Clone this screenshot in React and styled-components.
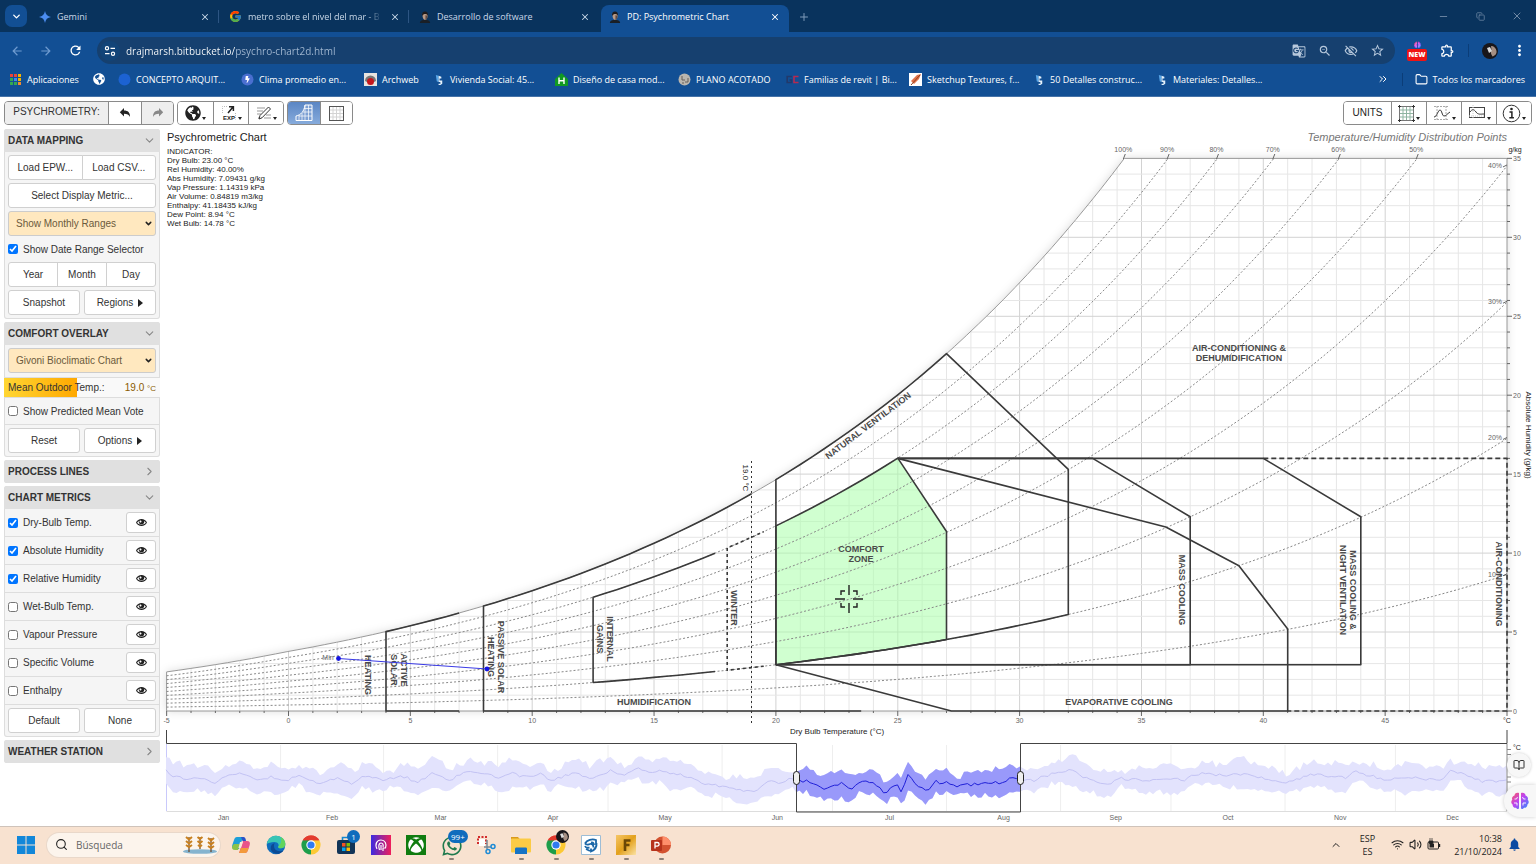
import * as React from "react";
import styled, { createGlobalStyle, css } from "styled-components";
import {
  MdArrowBack,
  MdArrowForward,
  MdRefresh,
  MdGTranslate,
  MdZoomOut,
  MdOutlineVisibilityOff,
  MdStarOutline,
  MdOutlineExtension,
  MdMoreVert,
  MdNotifications,
} from "react-icons/md";
import { FaGlobeAmericas, FaXbox, FaWhatsapp, FaBolt } from "react-icons/fa";
import { FcGoogle } from "react-icons/fc";
import { ImEye } from "react-icons/im";
import {
  X,
  Plus,
  Minus,
  Copy,
  ChevronDown,
  ChevronRight,
  ChevronUp,
  ChevronsRight,
  Folder,
  Search,
  Wifi,
  Volume2,
  BookOpen,
} from "lucide-react";

const ui = '"Open Sans", "Noto Sans", sans-serif';
const sans = '"Liberation Sans", Arial, sans-serif';

const GlobalStyle = createGlobalStyle`
  * { box-sizing: border-box; }
  body { margin: 0; background: #fff; }
  button, input, select { font: inherit; color: inherit; margin: 0; }
  button { padding: 0; border: 0; background: none; cursor: pointer; }
  a { color: inherit; text-decoration: none; }
`;

const Page = styled.div`
  min-height: 100vh;
  display: flex;
  flex-direction: column;
  font-family: ${sans};
  font-size: 10px;
  color: #333;
`;

/* ---------- browser ---------- */

const Browser = styled.header`
  font-family: ${ui};
  font-size: 9px;
  color: #fff;
  background: #124f94;
`;

const TabStrip = styled.div`
  height: 32px;
  display: flex;
  align-items: flex-end;
  padding: 0 12px 0 5px;
  background: #09335d;
`;

const TabSearch = styled.button`
  width: 22px;
  height: 22px;
  margin: 0 4px 5px 0;
  display: grid;
  place-items: center;
  border-radius: 7px;
  background: #124f94;
`;

const Tab = styled.div`
  width: 190px;
  height: 27px;
  display: flex;
  align-items: center;
  gap: 6px;
  padding: 0 ${({ $divided }) => ($divided ? 2 : 9)}px 4px 8px;
  color: #c9d8e8;
  border-radius: 8px 8px 0 0;
  ${({ $active }) =>
    $active &&
    css`
      width: 188px;
      padding-right: 7px;
      color: #fff;
      background: #124f94;
    `}
`;

const TabTitle = styled.span`
  flex: 1;
  overflow: hidden;
  white-space: nowrap;
  ${({ $fade }) => $fade && "mask-image: linear-gradient(90deg, #000 88%, transparent);"}
`;

const IconButton = styled.button`
  display: grid;
  place-items: center;
  min-width: 14px;
  min-height: 14px;
  color: ${({ $color }) => $color || "inherit"};
`;

const Divider = styled.span`
  width: 1px;
  height: 13px;
  background: ${({ $color }) => $color || "#2d5583"};
`;

const NewTab = styled(IconButton)`
  margin: 0 0 8px 8px;
  color: #7f9bba;
`;

const WindowButtons = styled.div`
  margin-left: auto;
  height: 32px;
  display: flex;
  align-items: center;
  gap: 23px;
  color: #7089a5;
`;

const NavBar = styled.div`
  display: flex;
  align-items: center;
  padding: 5px 8px 0 10px;
`;

const NavButtons = styled.div`
  display: flex;
  gap: 15px;
  width: 87px;
`;

const Omnibox = styled.div`
  flex: 1;
  height: 27px;
  display: flex;
  align-items: center;
  gap: 12px;
  padding: 0 10px 0 3px;
  border-radius: 14px;
  background: #16406f;
  color: #b7c8dc;
`;

const SiteInfo = styled.button`
  width: 20px;
  height: 20px;
  display: grid;
  place-items: center;
  border-radius: 50%;
  background: #124478;
  margin-right: -6px;
`;

const Url = styled.input`
  flex: 1;
  border: 0;
  outline: 0;
  padding: 0;
  font-size: 10px;
  color: transparent;
  background: linear-gradient(90deg, #fff 109px, #a4b9d2 109px);
  background-clip: text;
`;

const Extensions = styled.div`
  display: flex;
  align-items: center;
  gap: 13px;
  padding-left: 12px;
`;

const NewBadge = styled.button`
  width: 20px;
  height: 20px;
  display: flex;
  flex-direction: column;
  align-items: center;
  justify-content: flex-end;
  color: #b455e0;
  span {
    width: 20px;
    line-height: 12px;
    border-radius: 2px;
    background: #f01414;
    color: #fff;
    font-size: 7px;
    font-weight: 800;
  }
`;

const Bookmarks = styled.nav`
  height: 33px;
  display: flex;
  align-items: center;
  padding: 0 11px 2px 9px;
  border-bottom: 1px solid #4673a8;
`;

const Bookmark = styled.a`
  width: ${({ $width }) => $width}px;
  display: flex;
  align-items: center;
  gap: 5px;
  white-space: nowrap;
`;

const BookmarkEnd = styled.div`
  margin-left: auto;
  display: flex;
  align-items: center;
  gap: 12px;
`;

/* ---------- application toolbar ---------- */

const Toolbar = styled.div`
  display: flex;
  gap: 3px;
  padding: 4px;
`;

const Group = styled.div`
  display: flex;
  height: 24px;
  border: 1px solid #8a8a8a;
  border-radius: 4px;
  overflow: hidden;
  &:last-child {
    margin-left: auto;
  }
`;

const ToolLabel = styled.span`
  width: 103px;
  text-align: center;
  line-height: 20px;
  background: #eee;
`;

const Tool = styled.button`
  width: ${({ $width }) => $width || 35}px;
  display: flex;
  align-items: center;
  justify-content: center;
  gap: 1px;
  border-left: 1px solid #8a8a8a;
  background: ${({ $active }) => ($active ? "linear-gradient(#5b86c4, #86abdc)" : "#fff")};
  color: #222;
  &:first-child {
    border-left: 0;
  }
  &:disabled {
    background: #eee;
    color: #888;
  }
`;

const TextTool = styled(Tool)`
  padding-bottom: 2px;
`;

const Caret = styled.i`
  align-self: flex-end;
  margin-bottom: 4px;
  border: 2px solid transparent;
  border-top: 3px solid #222;
  border-bottom: 0;
`;

/* ---------- side bar ---------- */

const Main = styled.main`
  flex: 1;
  display: flex;
  align-items: flex-start;
  position: relative;
`;

const SideBar = styled.aside`
  width: 160px;
  flex: none;
  display: flex;
  flex-direction: column;
  gap: 3px;
  padding-left: 4px;
`;

const Panel = styled.section`
  border-radius: 3px;
  background: #f5f5f5;
  box-shadow: inset 0 0 0 1px #ddd;
  overflow: hidden;
`;

const PanelHead = styled.button`
  width: 100%;
  height: 23px;
  display: flex;
  align-items: center;
  justify-content: space-between;
  padding: 0 4px;
  background: #e0e0e0;
  font-weight: bold;
  svg {
    color: #888;
  }
`;

const Stack = styled.div`
  display: flex;
  flex-direction: column;
  gap: 3px;
  padding: ${({ $tight }) => ($tight ? "3px" : "4px")} 4px 4px;
`;

const Pair = styled.div`
  display: flex;
  gap: 4px;
`;

const Joined = styled.div`
  display: flex;
  button + button {
    margin-left: -1px;
    border-radius: 0;
  }
  button:first-child {
    border-radius: 3px 0 0 3px;
  }
  button:last-child {
    border-radius: 0 3px 3px 0;
  }
`;

const Button = styled.button`
  flex: 1;
  height: 25px;
  min-height: 25px;
  display: flex;
  align-items: center;
  justify-content: center;
  gap: 5px;
  border: 1px solid #d0d0d0;
  border-radius: 3px;
  background: #fff;
`;

const Arrow = styled.i`
  border: 4px solid transparent;
  border-left: 5px solid #222;
  border-right: 0;
`;

const SelectWrap = styled.label`
  height: 25px;
  display: grid;
  align-items: center;
  select,
  svg {
    grid-area: 1 / 1;
  }
  select {
    height: 25px;
    padding: 0 7px;
    appearance: none;
    border: 1px solid #ccc;
    border-radius: 3px;
    background: #ffe8bf;
    color: #6b5a3c;
  }
  svg {
    justify-self: end;
    margin-right: 3px;
    pointer-events: none;
    color: #222;
  }
`;

const Check = styled.label`
  flex: 1;
  display: flex;
  align-items: center;
  gap: 5px;
  input {
    width: 10px;
    height: 10px;
  }
`;

const CheckRow = styled.div`
  height: ${({ $height }) => $height || 28}px;
  display: flex;
  padding: 0 4px;
  align-items: center;
  border-bottom: ${({ $plain }) => ($plain ? 0 : "1px solid #ddd")};
`;

const EyeButton = styled.button`
  width: 30px;
  height: 21px;
  display: grid;
  place-items: center;
  border: 1px solid #d0d0d0;
  border-radius: 3px;
  background: #fff;
  color: #222;
`;

const Slider = styled.div`
  height: 21px;
  display: grid;
  align-items: center;
  border: solid #ddd;
  border-width: 1px 0;
  > * {
    grid-area: 1 / 1;
  }
  input {
    width: 100%;
    height: 19px;
    appearance: none;
    background: linear-gradient(90deg, #ffd633, #ffa800) 0 0 / 47% 100% no-repeat #f9f9f9;
  }
  input::-webkit-slider-thumb {
    appearance: none;
    width: 1px;
    height: 19px;
  }
`;

const SliderText = styled.div`
  display: flex;
  justify-content: space-between;
  padding: 0 4px;
  pointer-events: none;
  output {
    color: #8a5a00;
  }
  small {
    font-size: 8px;
  }
`;

/* ---------- charts ---------- */

const Charts = styled.div`
  flex: 1;
  min-width: 0;
  display: flex;
  flex-direction: column;
  position: relative;
  svg {
    display: block;
    width: 100%;
    height: auto;
    overflow: visible;
  }
`;

const Readout = styled.div`
  position: absolute;
  left: 7px;
  top: 2px;
  color: #222;
  h1 {
    margin: 0 0 3px;
    font-size: 11px;
    line-height: 13px;
    font-weight: normal;
  }
  p {
    margin: 0;
    font-size: 8px;
    line-height: 9px;
  }
`;

const Caption = styled.div`
  position: absolute;
  right: 29px;
  top: 2px;
  font-size: 11px;
  line-height: 13px;
  font-style: italic;
  color: #777;
`;

const Floating = styled.div`
  position: absolute;
  right: 0;
  bottom: 9px;
  display: flex;
  flex-direction: column;
  align-items: flex-end;
  gap: 8px;
`;

const ReadButton = styled.button`
  width: 24px;
  height: 24px;
  margin-right: 5px;
  display: grid;
  place-items: center;
  border-radius: 50%;
  background: #f7f7f7;
  box-shadow: 0 0 3px rgba(0, 0, 0, 0.2);
`;

const BrainButton = styled.button`
  width: 32px;
  height: 32px;
  display: grid;
  place-items: center;
  border-radius: 16px 0 0 16px;
  background: #f7f7f7;
  box-shadow: 0 0 4px rgba(0, 0, 0, 0.2);
`;

const DEG_MIN = -5;
const DEG_MAX = 50;
const px = (t) => 288.5 + t * 24.37;
const py = (w) => 711 - w * 15.79;

// humidity ratio at saturation, g/kg, at sea level
const saturation = (t) => {
  const p =
    t < 0
      ? 0.6112 * Math.exp((22.46 * t) / (272.62 + t))
      : 0.6112 * Math.exp((17.62 * t) / (243.12 + t));
  return (622 * p) / (101.325 - p);
};

const curve = (rh, from, to) => {
  const pts = [];
  const n = Math.max(2, Math.ceil(Math.abs(to - from) * 2));
  for (let i = 0; i <= n; i++) {
    const t = from + ((to - from) * i) / n;
    pts.push([t, rh * saturation(t)]);
  }
  return pts;
};

const tempAt = (rh, w) => {
  let lo = DEG_MIN;
  let hi = DEG_MAX;
  for (let i = 0; i < 30; i++) {
    const mid = (lo + hi) / 2;
    if (rh * saturation(mid) < w) lo = mid;
    else hi = mid;
  }
  return lo;
};

const path = (pts) =>
  "M" + pts.map(([t, w]) => px(t).toFixed(1) + " " + py(w).toFixed(1)).join("L");

const dry = 0.2 * saturation(20);

const comfort = [...curve(0.8, 20, 25), [27, 11.37], ...curve(0.2, 27, 20)];

const zones = [
  [[7, 0], [4, 0], ...curve(1, 4, 7)],
  [[23.5, 0], [8, 0], ...curve(1, 8, 19)],
  [...curve(0.2, 17.5, 12.5), ...curve(0.8, 12.5, 17.5)],
  [...comfort, [20, 11.75]],
  [[20, dry], ...curve(1, 20, 27), [32, 15.3], ...curve(0.2, 32, 20)],
  [[25, 16], [33, 16], [37, 12.3], [37, dry], [20, dry]],
  [[25, 16], [40, 16], [44, 12.3], [44, dry], [20, dry]],
  [[25, 16], [36, 11.65], [39, 9.2], [41, 5.2], [41, 0], [27.2, 0], [20, dry]],
];

const zoneLabels = [
  [1239, 351, 0, "AIR-CONDITIONING &", "DEHUMIDIFICATION"],
  [861, 552, 0, "COMFORT", "ZONE"],
  [654, 705, 0, "HUMIDIFICATION"],
  [1119, 705, 0, "EVAPORATIVE COOLING"],
  [870, 428, -37, "NATURAL VENTILATION"],
  [365, 675, 90, "HEATING"],
  [401, 670, 90, "ACTIVE", "SOLAR"],
  [498, 657, 90, "PASSIVE SOLAR", "HEATING"],
  [607, 639, 90, "INTERNAL", "GAINS"],
  [731, 608, 90, "WINTER"],
  [1179, 590, 90, "MASS COOLING"],
  [1350, 590, 90, "MASS COOLING &", "NIGHT VENTILATION"],
  [1496, 584, 90, "AIR-CONDITIONING"],
];

const Chart = styled.svg`
  font-family: ${sans};
  font-size: 7px;
  fill: #666;
  text-anchor: middle;
`;

const ZoneText = styled.text`
  font-size: 9px;
  font-weight: bold;
  fill: #4a4a4a;
`;

const AxisTitle = styled.text`
  font-size: 8px;
  fill: #222;
`;

const range = (a, b) => Array.from({ length: b - a + 1 }, (_, i) => a + i);

function PsychroChart() {
  const top = tempAt(1, 35);
  const outline = [...curve(1, DEG_MIN, top), [50, 35], [50, 0], [-5, 0]];
  return (
    <Chart viewBox="160 129 1376 610" role="img" aria-label="Psychrometric chart">
      <defs>
        <filter id="soft" x="-5%" y="-5%" width="110%" height="110%">
          <feDropShadow dx="0" dy="0" stdDeviation="5" floodOpacity="0.15" />
        </filter>
      </defs>
      <path d={path(outline) + "Z"} fill="#fff" filter="url(#soft)" />
      <g fill="none">
        {range(-4, 49).map((t) => (
          <path
            key={t}
            d={path([[t, 0], [t, Math.min(35, saturation(t))]])}
            stroke={t % 5 ? "#e6e6e6" : "#d2d2d2"}
          />
        ))}
        {range(1, 34).map((w) => (
          <path
            key={w}
            d={path([[tempAt(1, w), w], [50, w]])}
            stroke={w % 5 ? "#e6e6e6" : "#d2d2d2"}
          />
        ))}
        <path d={path(outline) + "Z"} stroke="#999" />
      </g>
      <path d={path(comfort) + "Z"} fill="#aaffaa" fillOpacity="0.55" />
      <g fill="none" stroke="#888" strokeDasharray="2 2">
        {range(1, 9).map((n) => (
          <path key={n} d={path(curve(n / 10, DEG_MIN, tempAt(n / 10, 35)))} />
        ))}
      </g>
      <g stroke="#666">
        {range(-5, 50).map((t) => (
          <path key={t} d={`M${px(t)} 711v${t % 5 ? 2 : 5}`} />
        ))}
        {range(0, 35).map((w) => (
          <path key={w} d={`M1507 ${py(w)}h${w % 5 ? 3 : 5}`} />
        ))}
        {range(5, 10).map((n) => (
          <path key={n} d={`M${px(tempAt(n / 10, 35)) - 1} 159l2 -5`} />
        ))}
        {range(1, 4).map((n) => (
          <path key={n} d={`M1503 ${py((n / 10) * saturation(50)) + 1}l4 -2`} />
        ))}
      </g>
      <g fill="none" stroke="#3a3a3a" strokeWidth="1.6" strokeLinejoin="round">
        {zones.map((z, i) => (
          <path key={i} d={path(z)} />
        ))}
        <path
          d={path([...curve(0.2, 19.5, 18), ...curve(0.8, 18, 19.5)])}
          strokeDasharray="3 3"
        />
        <path d={path([[40, 16], [50, 16], [50, 0], [41, 0]])} strokeDasharray="5 3" />
      </g>
      <path d="M751.5 461V723" stroke="#333" strokeDasharray="2 3" />

      {range(-1, 9).map((n) => (
        <text key={n} x={px(n * 5)} y="723">{n * 5}</text>
      ))}
      <text x={px(50)} y="723" fill="#222">°C</text>
      {range(0, 7).map((n) => (
        <text key={n} x="1513" y={py(n * 5) + 3} textAnchor="start">{n * 5}</text>
      ))}
      <text x="1515" y="152" fill="#222">g/kg</text>
      {range(5, 10).map((n) => (
        <text key={n} x={px(tempAt(n / 10, 35)) - 1} y="152">{n * 10}%</text>
      ))}
      {range(1, 4).map((n) => (
        <text key={n} x="1495" y={py((n / 10) * saturation(50)) + 2}>{n * 10}%</text>
      ))}
      <AxisTitle x="837" y="734">Dry Bulb Temperature (°C)</AxisTitle>
      <AxisTitle transform="translate(1526 435) rotate(90)">Absolute Humidity (g/kg)</AxisTitle>
      <AxisTitle transform="translate(743 478) rotate(90)">19.0 °C</AxisTitle>

      {zoneLabels.map(([x, y, turn, ...lines]) => (
        <ZoneText key={x} transform={`translate(${x} ${y}) rotate(${turn})`}>
          {lines.map((line, i) => (
            <tspan key={line} x="0" y={i * 10}>{line}</tspan>
          ))}
        </ZoneText>
      ))}

      <text x="328" y="660">Min</text>
      <g fill="#1515e0">
        <path d="M338.5 658.5L487 669" stroke="#3a3ae6" />
        <circle cx="338.5" cy="658.5" r="2.4" />
        <circle cx="487" cy="669" r="2.4" />
      </g>
      <path
        d="M849 585v10M849 603v10M835 599h10M853 599h10M841 595v-4h4M853 591h4v4M857 603v4h-4M845 607h-4v-4"
        fill="none"
        stroke="#222"
        strokeWidth="1.4"
      />
    </Chart>
  );
}

const months = "Jan Feb Mar Apr May Jun Jul Aug Sep Oct Nov Dec".split(" ");
const days = [31, 28, 31, 30, 31, 30, 31, 31, 30, 31, 30, 31];

// mean daily temperature, [x, y]
const means = [
  [166, 770], [172, 776], [190, 780], [202, 777], [215, 783], [230, 775], [241, 772], [256, 780],
  [270, 777], [285, 781], [300, 776], [320, 784], [335, 778], [352, 783], [368, 775], [385, 780],
  [402, 776], [418, 782], [432, 774], [450, 780], [468, 771], [484, 773], [500, 779], [512, 773],
  [522, 777], [540, 774], [552, 780], [575, 773], [592, 778], [610, 771], [625, 774], [638, 769],
  [650, 774], [662, 771], [680, 774], [696, 781], [713, 785], [735, 790], [751, 792], [762, 787],
  [767, 782], [784, 782], [792, 778], [796, 780], [811, 782], [823, 789], [841, 783], [850, 789],
  [863, 780], [875, 784], [885, 794], [896, 784], [901, 791], [908, 776], [926, 792], [937, 780],
  [942, 785], [948, 782], [956, 786], [964, 785], [986, 784], [1002, 782], [1014, 777], [1021, 781],
  [1035, 780], [1057, 772], [1073, 770], [1084, 778], [1095, 782], [1109, 784], [1117, 778],
  [1133, 780], [1155, 780], [1166, 778], [1183, 780], [1204, 772], [1218, 775], [1248, 775],
  [1259, 778], [1286, 782], [1319, 773], [1330, 778], [1349, 777], [1354, 770], [1368, 775],
  [1385, 780], [1417, 778], [1434, 780], [1445, 778], [1451, 770], [1461, 773], [1483, 782],
  [1507, 780],
];

const jitter = (n) => {
  const s = Math.sin(n * 127.1) * 43758.5;
  return s - Math.floor(s) - 0.5;
};

const series = [];
for (let x = 166; x <= 1507; x += 3.5) {
  const i = Math.max(1, means.findIndex((m) => m[0] >= x));
  const [x0, y0] = means[i - 1];
  const [x1, y1] = means[i];
  const y = y0 + ((y1 - y0) * (x - x0)) / (x1 - x0) + jitter(x) * 3;
  const swell = Math.sin(x / 13) * 2 + Math.sin(x / 5.3) * 1.5;
  series.push([x, y, y - 12 - swell - jitter(x + 1) * 6, y + 12 + swell + jitter(x + 2) * 5]);
}

const join = (pts) => pts.map((p) => p[0].toFixed(1) + " " + p[1].toFixed(1)).join("L");
const meanPath = "M" + join(series);
const bandPath =
  "M" +
  join(series.map((s) => [s[0], s[2]])) +
  "L" +
  join(series.map((s) => [s[0], s[3]]).reverse()) +
  "Z";

function DateRange() {
  let day = 0;
  return (
    <Chart viewBox="160 739 1376 87" role="img" aria-label="Date range">
      <clipPath id="picked">
        <path d="M796 744h224v68h-224z" />
      </clipPath>
      <path d="M166.5 811.5H1507" stroke="#ddd" />
      {months.map((name, i) => {
        const x = 166.5 + (day * 1343) / 365;
        day += days[i];
        const end = 166.5 + (day * 1343) / 365;
        return (
          <g key={name}>
            <path d={`M${x} 745V811`} stroke="#eee" />
            <text x={(x + end) / 2} y="820">{name}</text>
          </g>
        );
      })}
      <path d="M166.5 744V811" stroke="#c9c9fb" />
      <path d={bandPath} fill="#e3e3fd" />
      <path d={meanPath} fill="none" stroke="#c3c3f4" />
      <g clipPath="url(#picked)">
        <path d={bandPath} fill="#9999fa" />
        <path d={meanPath} fill="none" stroke="#2020d8" />
      </g>
      <path d="M166.5 730V743.5H796.5V812H1020.5V743.5H1507V730" fill="none" stroke="#444" />
      <path d="M1507 744V811M1507 749.5h4M1507 754.5h4M1507 777h4M1507 782h4" stroke="#888" />
      <g fill="#eee" stroke="#222">
        <rect x="793.5" y="771.5" width="6" height="13" rx="3" />
        <rect x="1017.5" y="771.5" width="6" height="13" rx="3" />
      </g>
      <text x="1517" y="750" fill="#222">°C</text>
    </Chart>
  );
}

/* ---------- drawings ---------- */

const Svg = ({ size = 20, box = 20, children }) => (
  <svg width={size} height={size} viewBox={`0 0 ${box} ${box}`} fill="none" aria-hidden="true">
    {children}
  </svg>
);

const Portrait = () => (
  <Svg size={12} box={14}>
    <path d="M1 14c0-3 3-3.5 6-3.5s6 .5 6 3.5z" fill="#1a1f26" />
    <path d="M4 4.5C4 2.5 5.5 1.5 7.2 1.5S10 3 10 5.5 8.700 10.500 7 10.500 4 8 4 4.500z" fill="#b99a86" />
    <path d="M3.600 6C3 2.500 4.500.5 7 .5s4 2 3.400 5C9.500 3.500 8 3.500 7 3.500S4.500 4 3.600 6z" fill="#201c1c" />
    <path d="M7.500 5v5.400C9 10 10 8 10 5.500z" fill="#5e4a42" />
  </Svg>
);

const Avatar = () => (
  <Svg size={16} box={16}>
    <circle cx="8" cy="8" r="8" fill="#18161a" />
    <path d="M9 3c3 0 5 2 5.500 5s-2 5-4 5.500C9 11 8 9 9.500 7z" fill="#a58f83" />
    <path d="M5 5l3-1 2 4-3 2z" fill="#ddd" />
  </Svg>
);

const Reply = () => (
  <Svg size={12} box={12}>
    <path d="M5 1v2.600c4 0 6 2 6 6.400C10 7.600 8 6.800 5 6.800V9.400L.8 5.200z" fill="currentColor" />
  </Svg>
);

const Forward = () => (
  <Svg size={12} box={12}>
    <path d="M7 1v2.600c-4 0-6 2-6 6.400 1-2.400 3-3.200 6-3.200v2.600l4.200-4.200z" fill="currentColor" />
  </Svg>
);

const Export = () => (
  <Svg size={16} box={16}>
    <path d="M7 8l5-6M8 1.700h4.400V6" stroke="#222" strokeWidth="1.500" />
    <path d="M1.500 8V1.500H6M14.500 8v6.500" stroke="#bbb" strokeDasharray="1 1" />
    <text x="8" y="15" fontSize="6" fontWeight="bold" textAnchor="middle" fill="#222">EXP</text>
  </Svg>
);

const Pencil = () => (
  <Svg size={16} box={16}>
    <path d="M1 3h8M1 6h6M1 9h4M8 13h7M10 10h5M2 13h2" stroke="#999" />
    <path d="M3 14l1-3.500L12.500 2 14.500 4 6 12.800z" stroke="#333" />
  </Svg>
);

const ChartShape = () => (
  <Svg size={18} box={18}>
    <path d="M1 16.500V12c5-1 8-4.500 9-11h7v15.500z" fill="#7da0d4" stroke="#fff" />
    <path d="M4 11v5.500M7 9v7.500M10 1v15.500M13.500 1v15.500M9 4.500h8M8 8h9M4 12h13" stroke="#fff" strokeOpacity=".7" />
  </Svg>
);

const GridShape = ({ dots }) => (
  <Svg size={17} box={17}>
    <path d="M5 1v15M8.500 1v15M12 1v15M1 5h15M1 8.500h15M1 12h15" stroke={dots ? "#8fb5a2" : "#d4d4d4"} />
    <rect x="1.500" y="1.500" width="14" height="14" stroke={dots ? "#777" : "#555"} />
    {dots && <path d="M1.500 0v3M15.500 0v3M1.500 14v3M15.500 14v3M0 1.500h3M14 1.500h3M0 15.500h3M14 15.500h3" stroke="#333" />}
  </Svg>
);

const WaveShape = ({ boxed }) => (
  <Svg size={18} box={18}>
    {boxed ? (
      <>
        <rect x="1.500" y="3.500" width="15" height="10" stroke="#444" />
        <path d="M5 1v14M1 12h15" stroke="#ccc" strokeDasharray="1 1" />
        <path d="M2 8c2-3 4-3 6 0s5 2 8 2" stroke="#333" />
      </>
    ) : (
      <>
        <path d="M1 2.500h15M1 15.500h15M4 2v14M13 2v14" stroke="#aaa" strokeDasharray="2 1" />
        <path d="M1 13c3 0 4-7 6-7s2 6 4 6 3-2 6-4" stroke="#333" />
      </>
    )}
  </Svg>
);

const InfoShape = () => (
  <Svg size={19} box={19}>
    <circle cx="9.500" cy="9.500" r="8.300" stroke="#333" />
    <circle cx="9.500" cy="5" r="1.300" fill="#222" />
    <path d="M7.500 8h2.400v5.500M7.300 13.800h4.600" stroke="#222" strokeWidth="1.500" />
  </Svg>
);

const Tune = () => (
  <Svg size={12} box={12}>
    <path d="M6.500 3.300H11M1 8.700h4.500" stroke="#fff" strokeWidth="1.300" />
    <circle cx="3" cy="3.300" r="1.600" stroke="#fff" strokeWidth="1.200" />
    <circle cx="9" cy="8.700" r="1.600" stroke="#fff" strokeWidth="1.200" />
  </Svg>
);

const Apps = () => (
  <Svg size={13} box={13}>
    {["#e8453c", "#e8453c", "#f5b400", "#34a853", "#4285f4", "#f5b400", "#34a853", "#34a853", "#f28b30"].map((c, i) => (
      <rect key={i} x={1 + (i % 3) * 4} y={1 + Math.floor(i / 3) * 4} width="3" height="3" fill={c} />
    ))}
  </Svg>
);

const BlueDot = ({ bolt }) => (
  <Svg size={13} box={13}>
    <circle cx="6.500" cy="6.500" r="6" fill={bolt ? "#4a6fd0" : "#1c62d2"} />
    {bolt && <FaBolt x="3" y="3" size={7} color="#fff" />}
  </Svg>
);

const Arch = () => (
  <Svg size={13} box={13}>
    <path d="M0 0h13v13H0z" fill="#e8e4e0" />
    <path d="M1 8a5.500 5.500 0 0111 0l-2 1H3z" fill="#777" />
    <circle cx="6.500" cy="8.500" r="3.500" fill="#c4161c" />
  </Svg>
);

const Leaf = () => (
  <Svg size={11} box={12}>
    <path d="M2 1l3 1v7L3 8z" fill="#58a6e8" />
    <path d="M5 2l3 1v2H6v2h3v3.500L7 12H5v-1.500h2V9L5 8.500z" fill="#e6f2fb" />
  </Svg>
);

const House = () => (
  <Svg size={13} box={13}>
    <path d="M6.500 0L13 6v7H0V6z" fill="#119a22" />
    <path d="M4 4.500V11M9 4.500V11M4 7.700h5" stroke="#fff" strokeWidth="1.400" />
  </Svg>
);

const Plan = () => (
  <Svg size={13} box={13}>
    <circle cx="6.500" cy="6.500" r="6" fill="#b9b5ae" />
    <path d="M4 3v4h3M7 9h3V5M4 10h2" stroke="#665f58" />
  </Svg>
);

const Revit = () => (
  <Svg size={13} box={13}>
    <path d="M6 3.500H1.200v6H5.500V7H3.500" stroke="#22396b" strokeWidth="1.600" />
    <path d="M12.500 3.500H8v6h4.500" stroke="#b52a50" strokeWidth="1.600" />
  </Svg>
);

const Brush = () => (
  <Svg size={13} box={13}>
    <path d="M0 0h13v13H0z" fill="#fff" />
    <path d="M2 8l6-6 4-1-2 5-5 5z" fill="#e0714a" />
    <path d="M2 12L11 2" stroke="#8a4020" />
  </Svg>
);

const Brain = ({ size = 20 }) => (
  <Svg size={size} box={20}>
    <defs>
      <linearGradient id="brain" x2="1" y2="1">
        <stop stopColor="#ff5a5a" />
        <stop offset=".45" stopColor="#c042f0" />
        <stop offset="1" stopColor="#2f8cff" />
      </linearGradient>
    </defs>
    <path
      d="M9 2C6.500 1 4.500 2.500 4.500 4.500 2.500 5 1.500 7 2.300 8.800.8 10 1 12.500 2.600 13.500 2.500 16 4.500 17 6 16.700 7 18.300 8.500 18 9 17.500zM11 2c2.500-1 4.500.5 4.500 2.500 2 .5 3 2.500 2.200 4.300C19.200 10 19 12.500 17.400 13.500c.1 2.500-1.900 3.500-3.400 3.200-1 1.600-2.500 1.300-3 .8z"
      fill="url(#brain)"
    />
    <path d="M4.500 8h2l1-2M4 12h3v2.500M15.500 8h-2l-1-2M16 12h-3v2.500" stroke="#fff" strokeWidth=".9" />
  </Svg>
);

const ChromeLogo = ({ user }) => (
  <Svg>
    <path d="M10 10L1.800 5.200A9.500 9.500 0 0118.300 5.300z" fill="#e33b2e" />
    <path d="M10 10l8.300-4.700A9.500 9.500 0 0110 19.500z" fill="#fcc934" />
    <path d="M10 10v9.500A9.500 9.500 0 011.800 5.200z" fill="#1e9e4a" />
    <path d="M10 5.300h8.300L14 12.400z" fill="#fcc934" />
    <path d="M10 5.300H1.800L6 12.400z" fill="#1e9e4a" />
    <path d="M1.800 5.200A9.500 9.500 0 0118.300 5.300H10z" fill="#e33b2e" />
    <circle cx="10" cy="10" r="4.700" fill="#fff" />
    <circle cx="10" cy="10" r="3.600" fill="#2f7bf0" />
  </Svg>
);

const WindowsLogo = () => (
  <Svg>
    <path d="M1 1h8.500v8.500H1zM10.500 1H19v8.500h-8.500zM1 10.500h8.500V19H1zM10.500 10.500H19V19h-8.500z" fill="#1287d9" />
  </Svg>
);

const Copilot = () => (
  <Svg>
    <path d="M6 2h6l-4 12H4c-2.500 0-3.500-1.500-2.700-4L3 5c.6-2 1.500-3 3-3z" fill="#1d9fd8" />
    <path d="M3 9h6l-2 6H4c-2.500 0-3.500-1.500-2.700-4z" fill="#8bc34a" />
    <path d="M14 18H8L12 6h4c2.500 0 3.500 1.500 2.700 4L17 15c-.6 2-1.500 3-3 3z" fill="#e8548a" />
    <path d="M14 18H8l2-5h7.600L17 15c-.6 2-1.500 3-3 3z" fill="#f39a3c" />
    <path d="M10 2h2.500c1.500 0 2 1 2.500 4h-3.500z" fill="#2a52c8" />
    <path d="M9 7h3l-2 6H7.500z" fill="#fbe6d6" />
  </Svg>
);

const Edge = () => (
  <Svg>
    <circle cx="10" cy="10" r="9.300" fill="#0f6cbd" />
    <path d="M.8 9C2 3 6 .7 10 .7c5.500 0 9.300 4 9.300 8 0 3-2 4.600-4.500 4.600-2 0-3-.8-2.500-1.800 1-1.500 0-4.500-4-4.500C5 7 2 8 .8 9z" fill="#38c5b5" />
    <path d="M14.500 2c3 1.500 4.800 4 4.800 6.700 0 3-2 4.600-4.500 4.600-2 0-3-.8-2.500-1.800C15 9 16 6 14.500 2z" fill="#62d45d" />
    <path d="M8 11c0 4 4 6.500 9.500 4.500C14 20.500 7 19.500 5 15c-1-3 .5-6.500 4-7-1 .6-1 2-1 3z" fill="#0b4a94" />
  </Svg>
);

const Store = () => (
  <Svg>
    <path d="M6.500 5V2.500h7V5" stroke="#1487cf" strokeWidth="1.600" />
    <rect x="1" y="5" width="18" height="14" rx="2" fill="#123457" />
    <path d="M6 8h3.500v3.500H6z" fill="#f35325" />
    <path d="M10.500 8H14v3.500h-3.500z" fill="#81bc06" />
    <path d="M6 12.500h3.500V16H6z" fill="#05a6f0" />
    <path d="M10.500 12.500H14V16h-3.500z" fill="#ffba08" />
  </Svg>
);

const Finger = () => (
  <Svg>
    <defs>
      <linearGradient id="finger" x2="1">
        <stop stopColor="#3b2be0" />
        <stop offset="1" stopColor="#f01e5a" />
      </linearGradient>
    </defs>
    <path d="M0 0h20v20H0z" fill="url(#finger)" />
    <path d="M6 14c-2.500-5 0-9 4-9s6 4 4.500 8H12v3M8.500 15c-1.500-4-.5-7 1.500-7s2.500 2 2 4M10 10v5" stroke="#fff" strokeWidth="1.200" />
  </Svg>
);

const XboxLogo = () => (
  <Svg>
    <path d="M0 0h20v20H0z" fill="#107c10" />
    <FaXbox x="2" y="2" size={16} color="#fff" />
  </Svg>
);

const Snip = () => (
  <Svg>
    <path d="M2 9V2h8v7" stroke="#d22c2c" strokeWidth="2" strokeDasharray="2 1.500" />
    <path d="M3 4h6v7H3z" fill="#fff" />
    <path d="M11 5v9M8 12h7" stroke="#7a8794" strokeWidth="1.500" />
    <circle cx="12" cy="16.500" r="2" stroke="#1d8bd6" strokeWidth="1.500" />
    <circle cx="17" cy="11.500" r="2" stroke="#1d8bd6" strokeWidth="1.500" />
  </Svg>
);

const Explorer = () => (
  <Svg>
    <path d="M0 2h7l2 2.500H0z" fill="#d99a1c" />
    <rect y="3.500" width="20" height="14" rx="1" fill="#fbcb45" />
    <path d="M4 19v-5c0-1 .5-1.500 1.500-1.500h9c1 0 1.500.5 1.500 1.500v5z" fill="#1673c5" />
  </Svg>
);

const Sketchup = () => (
  <Svg>
    <path d="M.5.5h19v19H.5z" fill="#fff" stroke="#9dbdd6" />
    <path
      d="M4 8.500c2-3.500 7-5 11-3.500v5M4 8.500c1.500 2 3 1 5 .5s3.500 1 3.500 3.500M4 11c1 2.500 3 1.800 4.500 1.500M10 7.500c2-.5 3 .5 3 2.500M15.500 8c.5 4-2 7-5.500 8.500v-3M5 14l4 2"
      stroke="#1c67a8"
      strokeWidth="1.800"
    />
  </Svg>
);

const Cad = () => (
  <Svg>
    <defs>
      <linearGradient id="cad" x2="1" y2="1">
        <stop stopColor="#f6c667" />
        <stop offset=".5" stopColor="#e3a11d" />
        <stop offset="1" stopColor="#fbe2a4" />
      </linearGradient>
    </defs>
    <path d="M0 0h20v20H0z" fill="url(#cad)" />
    <path d="M9 16V5.500h5.500M9 10h4.500" stroke="#6b4706" strokeWidth="2.600" />
  </Svg>
);

const PowerPoint = () => (
  <Svg>
    <circle cx="11.500" cy="10" r="8.500" fill="#d35230" />
    <path d="M11.500 1.500A8.500 8.500 0 0120 10h-8.500z" fill="#ff8f6b" />
    <rect y="5" width="11" height="11" rx="1" fill="#b7331b" />
    <path d="M4 13.500V7.500h2.300a1.700 1.700 0 010 3.600H4" stroke="#fff" strokeWidth="1.300" />
  </Svg>
);

const Trees = () => (
  <svg width="36" height="19" viewBox="0 0 36 19" fill="none" aria-hidden="true">
    <ellipse cx="18" cy="16.500" rx="17" ry="2.300" fill="#86b4cf" />
    <path d="M7 17V2M18 14V2M29 17V3" stroke="#6a4526" strokeWidth="1.200" />
    <path
      d="M4 2l3 2.500L10 2M4 6l3 2.500L10 6M4 10l3 2 3-2M15.500 2L18 4l2.500-2M15.500 6L18 8l2.500-2M16 10l2 1.500 2-1.500M26 3l3 2.500L32 3M26 7l3 2.500L32 7M26 11l3 2 3-2"
      stroke="#c8801f"
      strokeWidth="2"
    />
  </svg>
);

const Battery = () => (
  <Svg size={14} box={14}>
    <rect x="1" y="4" width="10.500" height="7" rx="1" stroke="#222" />
    <path d="M12.500 6v3" stroke="#222" strokeWidth="1.400" />
    <path d="M2.500 5.500H7v4H2.500z" fill="#222" />
    <path d="M3 0v3M5 0v3M2 3h4v2L4 7 2 5z" fill="#222" stroke="#222" strokeWidth=".7" />
  </Svg>
);

/* ---------- task bar ---------- */

const TaskBar = styled.footer`
  height: 38px;
  display: flex;
  align-items: center;
  padding: 0 14px 2px 16px;
  border-top: 1px solid #cfc3ba;
  background: #f8e2d0;
  font-family: ${ui};
  font-size: 9px;
  color: #222;
`;

const SearchBox = styled.label`
  width: 173px;
  height: 24px;
  margin: 0 11px;
  display: flex;
  align-items: center;
  gap: 8px;
  padding: 0 2px 0 8px;
  border-radius: 12px;
  background: #fcf4ec;
  box-shadow: 0 0 0 1px #e9d8ca;
  input {
    flex: 1;
    min-width: 0;
    border: 0;
    padding: 0;
    outline: 0;
    background: none;
    font-size: 10px;
  }
  input::placeholder {
    color: #666;
  }
`;

const AppIcons = styled.div`
  display: flex;
  gap: 15px;
`;

const AppButton = styled.button`
  position: relative;
  width: 20px;
  height: 20px;
  display: grid;
  place-items: center;
  ${({ $open }) =>
    $open &&
    css`
      &::after {
        content: "";
        position: absolute;
        left: 8px;
        bottom: -5px;
        width: 5px;
        height: 2px;
        border-radius: 1px;
        background: #8d8178;
      }
    `}
`;

const Badge = styled.span`
  position: absolute;
  left: ${({ $wide }) => ($wide ? 7 : 11)}px;
  top: -5px;
  min-width: 13px;
  padding: 0 3px;
  line-height: 13px;
  border-radius: 7px;
  background: #0f6cbd;
  color: #fff;
  font-size: 8px;
`;

const UserBadge = styled.span`
  position: absolute;
  left: 10px;
  top: -5px;
  width: 13px;
  height: 13px;
  svg {
    width: 13px;
    height: 13px;
  }
`;

const Tray = styled.div`
  margin-left: auto;
  display: flex;
  align-items: center;
  text-align: center;
  line-height: 13px;
`;

const TrayGroup = styled.div`
  display: flex;
  gap: 5px;
  padding: 0 13px 0 16px;
`;

const Language = styled.div`
  padding-left: 17px;
`;

const Clock = styled.time`
  padding-right: 5px;
  text-align: right;
`;

const tabs = [
  { title: "Gemini", icon: <Svg size={12} box={12}><path d="M6 0c.6 3.600 2.400 5.400 6 6-3.600.6-5.400 2.400-6 6-.6-3.600-2.400-5.400-6-6 3.600-.6 5.400-2.400 6-6z" fill="#4c8df0" /></Svg>, divided: true },
  { title: "metro sobre el nivel del mar - B", icon: <FcGoogle size={13} />, fade: true, divided: true },
  { title: "Desarrollo de software", icon: <Portrait /> },
  { title: "PD: Psychrometric Chart", icon: <Portrait />, active: true },
];

const bookmarks = [
  [84, <Apps />, "Aplicaciones"],
  [25, <FaGlobeAmericas size={12} />, ""],
  [123, <BlueDot />, "CONCEPTO ARQUIT..."],
  [123, <BlueDot bolt />, "Clima promedio en..."],
  [70, <Arch />, "Archweb"],
  [121, <Leaf />, "Vivienda Social: 45..."],
  [123, <House />, "Diseño de casa mod..."],
  [108, <Plan />, "PLANO ACOTADO"],
  [123, <Revit />, "Familias de revit | Bi..."],
  [125, <Brush />, "Sketchup Textures, f..."],
  [123, <Leaf />, "50 Detalles construc..."],
  [121, <Leaf />, "Materiales: Detalles..."],
];

const metrics = [
  ["Dry-Bulb Temp.", true],
  ["Absolute Humidity", true],
  ["Relative Humidity", true],
  ["Wet-Bulb Temp.", false],
  ["Vapour Pressure", false],
  ["Specific Volume", false],
  ["Enthalpy", false],
];

const indicator = [
  "INDICATOR:",
  "Dry Bulb: 23.00 °C",
  "Rel Humidity: 40.00%",
  "Abs Humidity: 7.09431 g/kg",
  "Vap Pressure: 1.14319 kPa",
  "Air Volume: 0.84819 m3/kg",
  "Enthalpy: 41.18435 kJ/kg",
  "Dew Point: 8.94 °C",
  "Wet Bulb: 14.78 °C",
];

const apps = [
  { name: "Copilot", icon: <Copilot /> },
  { name: "Edge", icon: <Edge /> },
  { name: "Chrome", icon: <ChromeLogo /> },
  { name: "Store", icon: <Store />, count: "1" },
  { name: "Identity", icon: <Finger /> },
  { name: "Xbox", icon: <XboxLogo /> },
  { name: "WhatsApp", icon: <FaWhatsapp size={22} color="#1f7a4d" />, open: true, count: "99+" },
  { name: "Snipping tool", icon: <Snip /> },
  { name: "Explorer", icon: <Explorer />, open: true },
  { name: "Chrome profile", icon: <ChromeLogo />, open: true, user: true },
  { name: "SketchUp", icon: <Sketchup />, open: true },
  { name: "CAD", icon: <Cad />, open: true },
  { name: "PowerPoint", icon: <PowerPoint />, open: true },
];

function Heading({ title, closed }) {
  return (
    <PanelHead aria-expanded={!closed}>
      {title}
      {closed ? <ChevronRight size={13} /> : <ChevronDown size={13} />}
    </PanelHead>
  );
}

function Select({ label, option }) {
  return (
    <SelectWrap>
      <select aria-label={label}>
        <option>{option}</option>
      </select>
      <ChevronDown size={9} strokeWidth={4} />
    </SelectWrap>
  );
}

function Chrome() {
  return (
    <Browser>
      <TabStrip>
        <TabSearch aria-label="Search tabs"><ChevronDown size={11} strokeWidth={3} /></TabSearch>
        {tabs.map((tab) => (
          <Tab key={tab.title} $active={tab.active} $divided={tab.divided}>
            {tab.icon}
            <TabTitle $fade={tab.fade}>{tab.title}</TabTitle>
            <IconButton aria-label="Close tab"><X size={10} strokeWidth={2.5} /></IconButton>
            {tab.divided && <Divider />}
          </Tab>
        ))}
        <NewTab aria-label="New tab"><Plus size={12} /></NewTab>
        <WindowButtons>
          <IconButton aria-label="Minimize"><Minus size={11} /></IconButton>
          <IconButton aria-label="Restore"><Copy size={9} /></IconButton>
          <IconButton aria-label="Close"><X size={12} /></IconButton>
        </WindowButtons>
      </TabStrip>
      <NavBar>
        <NavButtons>
          <IconButton aria-label="Back" $color="#6f9bd0"><MdArrowBack size={14} /></IconButton>
          <IconButton aria-label="Forward" $color="#6f9bd0"><MdArrowForward size={14} /></IconButton>
          <IconButton aria-label="Reload"><MdRefresh size={15} /></IconButton>
        </NavButtons>
        <Omnibox>
          <SiteInfo aria-label="Site information"><Tune /></SiteInfo>
          <Url aria-label="Address" defaultValue="drajmarsh.bitbucket.io/psychro-chart2d.html" />
          <IconButton aria-label="Translate"><MdGTranslate size={14} /></IconButton>
          <IconButton aria-label="Zoom"><MdZoomOut size={14} /></IconButton>
          <IconButton aria-label="Tracking"><MdOutlineVisibilityOff size={14} /></IconButton>
          <IconButton aria-label="Bookmark"><MdStarOutline size={15} /></IconButton>
        </Omnibox>
        <Extensions>
          <NewBadge aria-label="Assistant"><Brain size={9} /><span>NEW</span></NewBadge>
          <IconButton aria-label="Extensions"><MdOutlineExtension size={15} /></IconButton>
          <Divider $color="#0b3d78" />
          <IconButton aria-label="Profile"><Avatar /></IconButton>
          <IconButton aria-label="Menu"><MdMoreVert size={17} /></IconButton>
        </Extensions>
      </NavBar>
      <Bookmarks>
        {bookmarks.map(([width, icon, name]) => (
          <Bookmark key={name} href="#" $width={width} aria-label={name || "Web"}>
            {icon}
            {name}
          </Bookmark>
        ))}
        <BookmarkEnd>
          <IconButton aria-label="More bookmarks"><ChevronsRight size={12} /></IconButton>
          <Divider $color="#0b3d78" />
          <Bookmark href="#"><Folder size={13} />Todos los marcadores</Bookmark>
        </BookmarkEnd>
      </Bookmarks>
    </Browser>
  );
}

function AppRow() {
  return (
    <AppIcons>
      {apps.map(({ name, icon, open, count, user }) => (
        <AppButton key={name} aria-label={name} $open={open}>
          {icon}
          {count && <Badge $wide={count.length > 1}>{count}</Badge>}
          {user && <UserBadge><Avatar /></UserBadge>}
        </AppButton>
      ))}
    </AppIcons>
  );
}

function App() {
  return (
    <Page>
      <GlobalStyle />
      <Chrome />
      <Toolbar>
        <Group>
          <ToolLabel>PSYCHROMETRY:</ToolLabel>
          <Tool aria-label="Undo" $width={33}><Reply /></Tool>
          <Tool aria-label="Redo" $width={32} disabled><Forward /></Tool>
        </Group>
        <Group>
          <Tool aria-label="Location"><FaGlobeAmericas size={16} /><Caret /></Tool>
          <Tool aria-label="Export"><Export /><Caret /></Tool>
          <Tool aria-label="Edit"><Pencil /><Caret /></Tool>
        </Group>
        <Group>
          <Tool aria-label="Psychrometric chart" $width={32} $active><ChartShape /></Tool>
          <Tool aria-label="Plain grid" $width={32}><GridShape /></Tool>
        </Group>
        <Group>
          <TextTool $width={47}>UNITS</TextTool>
          <Tool aria-label="Grid"><GridShape dots /><Caret /></Tool>
          <Tool aria-label="Lines"><WaveShape /><Caret /></Tool>
          <Tool aria-label="View"><WaveShape boxed /><Caret /></Tool>
          <Tool aria-label="Information"><InfoShape /><Caret /></Tool>
        </Group>
      </Toolbar>
      <Main>
        <SideBar>
          <Panel>
            <Heading title="DATA MAPPING" />
            <Stack $tight>
              <Joined>
                <Button>Load EPW...</Button>
                <Button>Load CSV...</Button>
              </Joined>
              <Button>Select Display Metric...</Button>
              <Select label="Display" option="Show Monthly Ranges" />
            </Stack>
            <CheckRow $height={18} $plain>
              <Check><input type="checkbox" defaultChecked />Show Date Range Selector</Check>
            </CheckRow>
            <Stack>
              <Joined>
                <Button>Year</Button>
                <Button>Month</Button>
                <Button>Day</Button>
              </Joined>
              <Pair>
                <Button>Snapshot</Button>
                <Button>Regions <Arrow /></Button>
              </Pair>
            </Stack>
          </Panel>
          <Panel>
            <Heading title="COMFORT OVERLAY" />
            <Stack $tight>
              <Select label="Overlay" option="Givoni Bioclimatic Chart" />
            </Stack>
            <Slider>
              <input id="mean" type="range" min="0" max="40" defaultValue="19" />
              <SliderText>
                <label htmlFor="mean">Mean Outdoor Temp.:</label>
                <output htmlFor="mean">19.0 <small>°C</small></output>
              </SliderText>
            </Slider>
            <CheckRow $height={27}>
              <Check><input type="checkbox" />Show Predicted Mean Vote</Check>
            </CheckRow>
            <Stack $tight>
              <Pair>
                <Button>Reset</Button>
                <Button>Options <Arrow /></Button>
              </Pair>
            </Stack>
          </Panel>
          <Panel>
            <Heading title="PROCESS LINES" closed />
          </Panel>
          <Panel>
            <Heading title="CHART METRICS" />
            {metrics.map(([name, on]) => (
              <CheckRow key={name}>
                <Check><input type="checkbox" defaultChecked={on} />{name}</Check>
                <EyeButton aria-label={`Style of ${name}`}><ImEye size={11} /></EyeButton>
              </CheckRow>
            ))}
            <Stack $tight>
              <Pair>
                <Button>Default</Button>
                <Button>None</Button>
              </Pair>
            </Stack>
          </Panel>
          <Panel>
            <Heading title="WEATHER STATION" closed />
          </Panel>
        </SideBar>
        <Charts>
          <PsychroChart />
          <DateRange />
          <Readout>
            <h1>Psychrometric Chart</h1>
            {indicator.map((line) => (
              <p key={line}>{line}</p>
            ))}
          </Readout>
          <Caption>Temperature/Humidity Distribution Points</Caption>
        </Charts>
        <Floating>
          <ReadButton aria-label="Reading mode"><BookOpen size={12} /></ReadButton>
          <BrainButton aria-label="Assistant"><Brain /></BrainButton>
        </Floating>
      </Main>
      <TaskBar>
        <IconButton aria-label="Start"><WindowsLogo /></IconButton>
        <SearchBox>
          <Search size={13} />
          <input aria-label="Búsqueda" placeholder="Búsqueda" />
          <Trees />
        </SearchBox>
        <AppRow />
        <Tray>
          <IconButton aria-label="Hidden icons"><ChevronUp size={12} /></IconButton>
          <Language>ESP<br />ES</Language>
          <TrayGroup>
            <Wifi size={13} />
            <Volume2 size={13} />
            <Battery />
          </TrayGroup>
          <Clock>10:38<br />21/10/2024</Clock>
          <IconButton aria-label="Notifications" $color="#0b4aa2"><MdNotifications size={15} /></IconButton>
        </Tray>
      </TaskBar>
    </Page>
  );
}

export default App;
